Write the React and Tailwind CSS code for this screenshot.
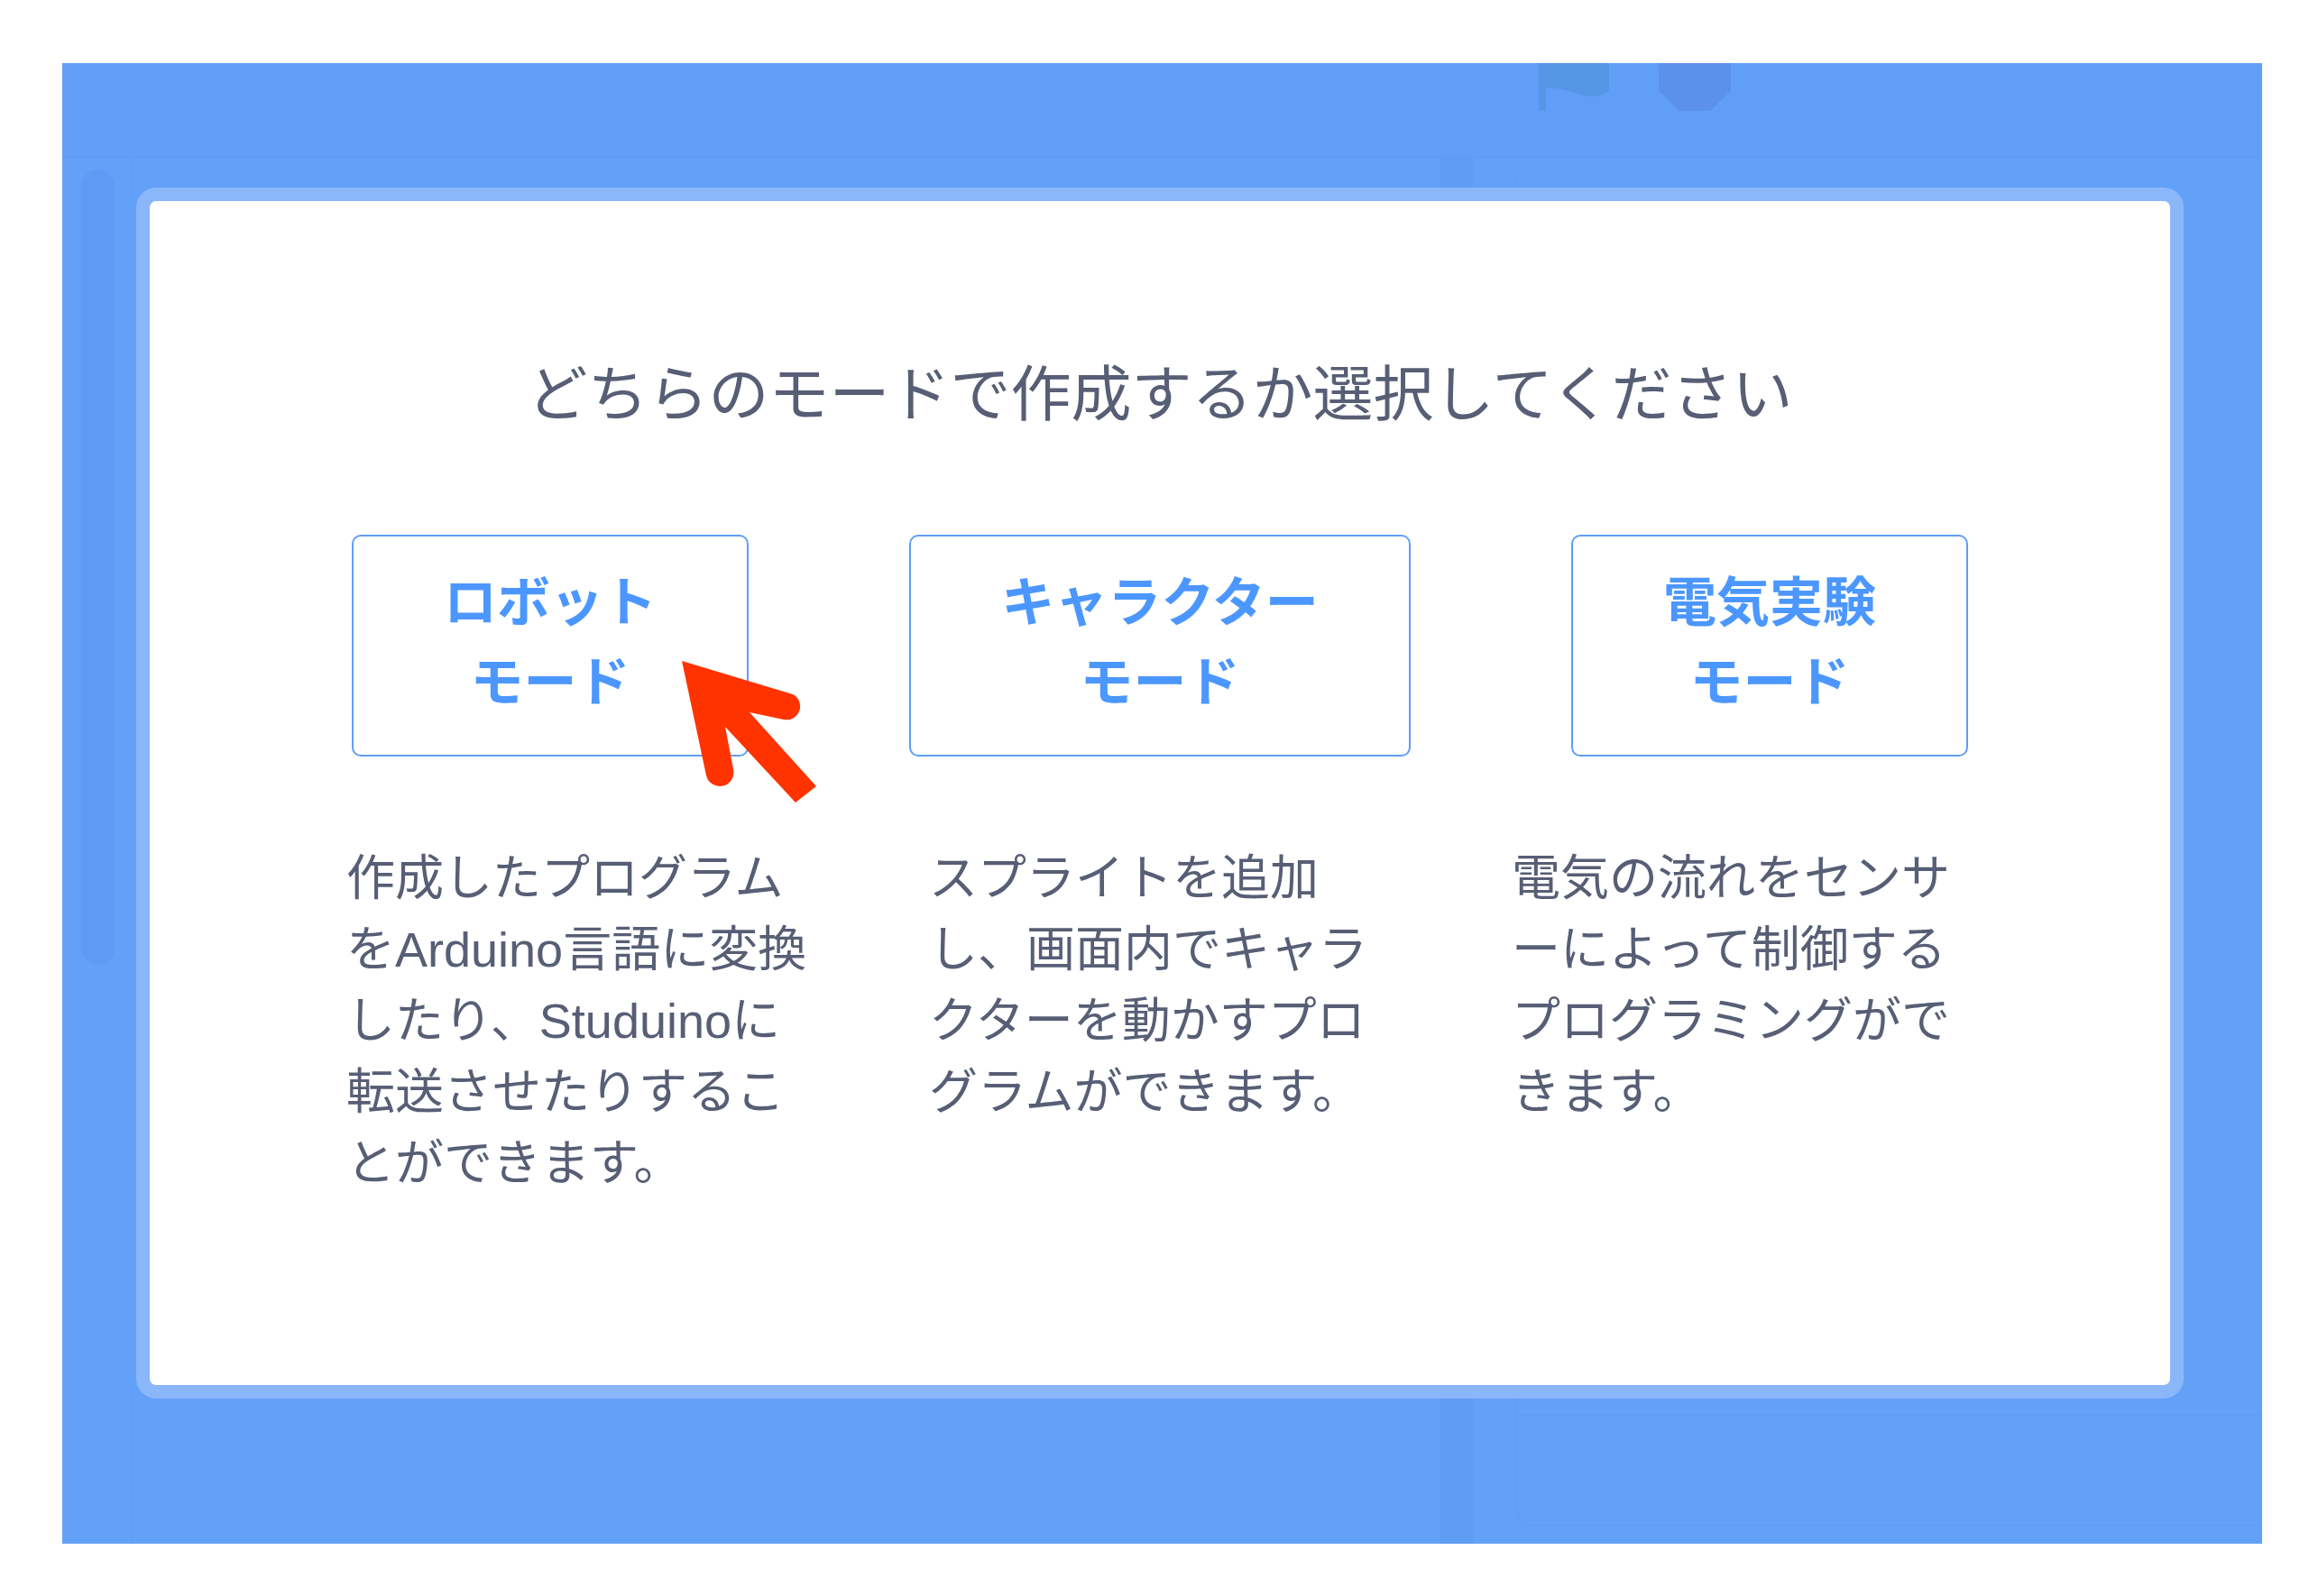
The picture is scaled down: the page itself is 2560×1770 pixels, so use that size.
const modes = [
  ['ロボット', 'モード'],
  ['キャラクター', 'モード'],
  ['電気実験', 'モード'],
];

const descriptions = [
  ['作成したプログラム', 'をArduino言語に変換', 'したり、Studuinoに', '転送させたりするこ', 'とができます。'],
  ['スプライトを追加', 'し、画面内でキャラ', 'クターを動かすプロ', 'グラムができます。'],
  ['電気の流れをセンサ', 'ーによって制御する', 'プログラミングがで', 'きます。'],
];

function Flag() {
  return (
    <svg width="80" height="53" viewBox="0 0 80 53">
      <rect x="0" y="0" width="8" height="53" fill="#5597e6" />
      <path d="M8 0 H78 V31 C70 37 60 38 50 36 C36 32 20 26 8 28 Z" fill="#5597e6" />
    </svg>
  );
}

function Stop() {
  return (
    <svg width="80" height="53" viewBox="0 0 80 53">
      <polygon points="0,0 80,0 80,31 57,53 23,53 0,31" fill="#5b91ea" />
    </svg>
  );
}

function Arrow() {
  return (
    <svg width="180" height="190" viewBox="0 0 180 190">
      <path
        d="M16 13 L43 140 A15 15 0 0 0 73 133 L64 86 L142 170 L165 152 L91 70 L129 78 A15 15 0 0 0 139 50 Z"
        fill="#ff3300"
      />
    </svg>
  );
}

export default function App() {
  return (
    <div
      className="w-[2560px] h-[1770px] bg-white pt-[70px] pl-[69px]"
      style={{ fontFamily: '"Liberation Sans", "Noto Sans CJK JP", sans-serif' }}
    >
      <div className="relative w-[2439px] h-[1642px] bg-[#63a1f8] overflow-hidden flex flex-col">
        {/* menu bar behind the overlay */}
        <div className="h-[105px] shrink-0 border-b border-[#5d9af3] flex items-start pl-[1637px] gap-[53px] bg-[#619ef8]">
          <Flag />
          <Stop />
        </div>

        {/* faint editor panels under the overlay */}
        <div className="flex flex-1">
          <div className="w-[79px] shrink-0 border-r border-[#5f9cf5] pl-[21px] pt-[13px]">
            <div className="w-[37px] h-[882px] rounded-full bg-[#5e9bf5]" />
          </div>
          <div className="w-[1449px] shrink-0" />
          <div className="w-[36px] shrink-0 bg-[#5f9cf4]" />
          <div className="flex-1 ml-[48px] mt-[10px] mb-[20px] flex flex-col rounded-l-[16px] border-l border-b border-[#5e9bf3]">
            <div className="h-[1385px] border-b border-[#5e9bf3]" />
          </div>
        </div>

        {/* modal */}
        <div className="absolute left-[82px] top-[138px] w-[2270px] h-[1343px] rounded-[22px] border-[15px] border-[#8ab6fa] bg-white">
          <h1 className="pt-[182px] text-center text-[67px] leading-[66px] font-normal text-[#575e75]">
            どちらのモードで作成するか選択してください
          </h1>

          <div className="mt-[122px] grid grid-cols-[676px_676px_676px] justify-center">
            {modes.map(([a, b]) => (
              <button
                key={a}
                className="justify-self-center flex flex-col items-center border-2 border-[#5e9ef8] rounded-[10px] px-[100px] pt-[30px] pb-[36px] text-[59px] leading-[88px] font-bold text-[#4c97ff] bg-white"
              >
                <span className="whitespace-nowrap">{a}</span>
                <span className="whitespace-nowrap">{b}</span>
              </button>
            ))}
          </div>

          <div className="mt-[96px] pl-[218px] grid grid-cols-[520px_520px_520px] gap-x-[126px]">
            {descriptions.map((lines, i) => (
              <div key={i} className="text-[54px] leading-[79px] text-[#575e75]">
                {lines.map((l) => (
                  <div key={l} className="whitespace-nowrap">{l}</div>
                ))}
              </div>
            ))}
          </div>
        </div>

        <div className="absolute left-[671px] top-[650px]">
          <Arrow />
        </div>
      </div>
    </div>
  );
}
